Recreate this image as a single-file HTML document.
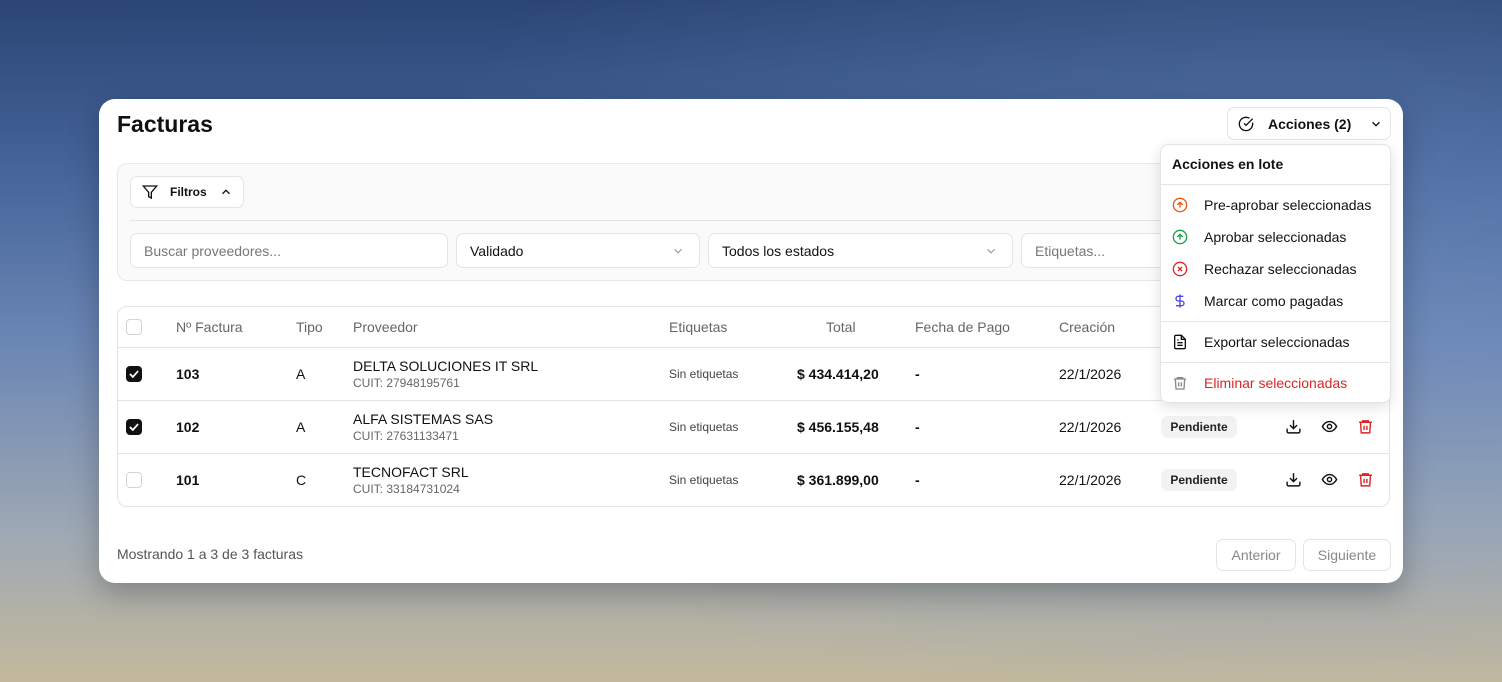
<!DOCTYPE html>
<html><head><meta charset="utf-8"><style>
*{box-sizing:border-box;margin:0;padding:0}
body{width:1502px;height:682px;overflow:hidden;font-family:"Liberation Sans",sans-serif;color:#111;
background:radial-gradient(ellipse 900px 500px at 1300px 250px,rgba(120,150,200,.35),rgba(0,0,0,0)),linear-gradient(180deg,#2a4575 0%,#46649a 25%,#6a86b4 50%,#9ea8b4 78%,#c4b99c 100%);position:relative}
.abs{position:absolute}
.card{left:99px;top:99px;width:1304px;height:484px;background:#fff;border-radius:16px;box-shadow:0 10px 30px rgba(0,0,0,.25)}
.btn{border:1px solid #e4e4e7;border-radius:7px;background:#fff;display:flex;align-items:center}
.inp{top:233px;height:35px;border:1px solid #e4e4e7;border-radius:7px;background:#fff;font-size:14px;display:flex;align-items:center;padding-left:13px}
.cell{position:absolute;font-size:14px}
.hd{color:#666;font-size:14px;top:319px}
.cb{position:absolute;left:126px;width:16px;height:16px;border-radius:4px;border:1px solid #d4d4d8;background:#fff}
.cb.on{background:#111;border-color:#111}
.row{position:absolute;left:117px;width:1273px;border-top:1px solid #e4e4e7}
.badge{position:absolute;left:1161px;height:22px;width:76px;background:#f2f2f3;border-radius:7px;font-size:12px;display:flex;align-items:center;justify-content:center;font-weight:bold;color:#222}
.mi{position:absolute;left:1172px;font-size:14px;display:flex;align-items:center}
.mi svg{margin-right:16px}
</style></head><body>
<div class="abs card"></div>
<div class="abs" style="left:117px;top:111px;font-size:23px;font-weight:bold">Facturas</div>
<div class="abs btn" style="left:1227px;top:107px;width:164px;height:33px;font-size:14px;font-weight:bold;padding-left:10px">
<svg width="16" height="16" viewBox="0 0 24 24" fill="none" stroke="#111" stroke-width="2"><path d="M21.8 10A10 10 0 1 1 17 3.3"/><path d="m9 11 3 3L22 4"/></svg>
<span style="margin-left:14px">Acciones (2)</span>
<svg style="margin-left:18px" width="14" height="14" viewBox="0 0 24 24" fill="none" stroke="#111" stroke-width="2.2"><path d="m6 9 6 6 6-6"/></svg></div>

<div class="abs" style="left:117px;top:163px;width:1273px;height:118px;background:#fafafa;border:1px solid #e8e8ea;border-radius:10px"></div>
<div class="abs btn" style="left:130px;top:176px;width:114px;height:32px;font-size:12px;font-weight:bold;padding-left:11px">
<svg width="16" height="16" viewBox="0 0 24 24" fill="none" stroke="#111" stroke-width="2"><path d="M22 3H2l8 9.5V19l4 2v-8.5z"/></svg>
<span style="margin-left:12px">Filtros</span>
<svg style="margin-left:12px" width="14" height="14" viewBox="0 0 24 24" fill="none" stroke="#111" stroke-width="2.2"><path d="m18 15-6-6-6 6"/></svg></div>
<div class="abs" style="left:130px;top:220px;width:1247px;height:1px;background:#e4e4e7"></div>
<div class="abs inp" style="left:130px;width:318px;color:#777">Buscar proveedores...</div>
<div class="abs inp" style="left:456px;width:244px">Validado<svg class="abs" style="right:14px" width="14" height="14" viewBox="0 0 24 24" fill="none" stroke="#999" stroke-width="2"><path d="m6 9 6 6 6-6"/></svg></div>
<div class="abs inp" style="left:708px;width:305px">Todos los estados<svg class="abs" style="right:14px" width="14" height="14" viewBox="0 0 24 24" fill="none" stroke="#999" stroke-width="2"><path d="m6 9 6 6 6-6"/></svg></div>
<div class="abs inp" style="left:1021px;width:356px;color:#777">Etiquetas...</div>

<div class="abs" style="left:117px;top:306px;width:1273px;height:201px;border:1px solid #e4e4e7;border-radius:10px"></div>
<div class="cb" style="top:319px"></div>
<div class="cell hd" style="left:176px">Nº Factura</div>
<div class="cell hd" style="left:296px">Tipo</div>
<div class="cell hd" style="left:353px">Proveedor</div>
<div class="cell hd" style="left:669px">Etiquetas</div>
<div class="cell hd" style="left:826px">Total</div>
<div class="cell hd" style="left:915px">Fecha de Pago</div>
<div class="cell hd" style="left:1059px">Creación</div>

<div class="row" style="top:347px"></div>
<div class="row" style="top:400px"></div>
<div class="row" style="top:453px"></div>

<div class="cb on" style="top:366px"><svg width="14" height="14" viewBox="0 0 24 24" fill="none" stroke="#fff" stroke-width="3"><path d="M5 12l5 5 9-10"/></svg></div>
<div class="cell" style="left:176px;top:366px;font-weight:bold">103</div>
<div class="cell" style="left:296px;top:366px">A</div>
<div class="cell" style="left:353px;top:358px">DELTA SOLUCIONES IT SRL</div>
<div class="cell" style="left:353px;top:376px;font-size:12px;color:#666">CUIT: 27948195761</div>
<div class="cell" style="left:669px;top:367px;font-size:12px;color:#444">Sin etiquetas</div>
<div class="cell" style="left:797px;top:366px;font-weight:bold">$ 434.414,20</div>
<div class="cell" style="left:915px;top:366px;font-weight:bold">-</div>
<div class="cell" style="left:1059px;top:366px">22/1/2026</div>

<div class="cb on" style="top:419px"><svg width="14" height="14" viewBox="0 0 24 24" fill="none" stroke="#fff" stroke-width="3"><path d="M5 12l5 5 9-10"/></svg></div>
<div class="cell" style="left:176px;top:419px;font-weight:bold">102</div>
<div class="cell" style="left:296px;top:419px">A</div>
<div class="cell" style="left:353px;top:411px">ALFA SISTEMAS SAS</div>
<div class="cell" style="left:353px;top:429px;font-size:12px;color:#666">CUIT: 27631133471</div>
<div class="cell" style="left:669px;top:420px;font-size:12px;color:#444">Sin etiquetas</div>
<div class="cell" style="left:797px;top:419px;font-weight:bold">$ 456.155,48</div>
<div class="cell" style="left:915px;top:419px;font-weight:bold">-</div>
<div class="cell" style="left:1059px;top:419px">22/1/2026</div>
<div class="badge" style="top:416px">Pendiente</div>

<div class="cb" style="top:472px"></div>
<div class="cell" style="left:176px;top:472px;font-weight:bold">101</div>
<div class="cell" style="left:296px;top:472px">C</div>
<div class="cell" style="left:353px;top:464px">TECNOFACT SRL</div>
<div class="cell" style="left:353px;top:482px;font-size:12px;color:#666">CUIT: 33184731024</div>
<div class="cell" style="left:669px;top:473px;font-size:12px;color:#444">Sin etiquetas</div>
<div class="cell" style="left:797px;top:472px;font-weight:bold">$ 361.899,00</div>
<div class="cell" style="left:915px;top:472px;font-weight:bold">-</div>
<div class="cell" style="left:1059px;top:472px">22/1/2026</div>
<div class="badge" style="top:469px">Pendiente</div>

<svg class="abs" style="left:1285px;top:418px" width="17" height="17" viewBox="0 0 24 24" fill="none" stroke="#111" stroke-width="2"><path d="M12 3v12M7 10l5 5 5-5M3 15v4a2 2 0 0 0 2 2h14a2 2 0 0 0 2-2v-4"/></svg>
<svg class="abs" style="left:1321px;top:418px" width="17" height="17" viewBox="0 0 24 24" fill="none" stroke="#111" stroke-width="2"><path d="M2 12s3.5-7 10-7 10 7 10 7-3.5 7-10 7S2 12 2 12z"/><circle cx="12" cy="12" r="3"/></svg>
<svg class="abs" style="left:1357px;top:418px" width="17" height="17" viewBox="0 0 24 24" fill="none" stroke="#dc2626" stroke-width="2"><path d="M3 6h18M8 6V4h8v2M5 6l1 15h12l1-15M10 11v6M14 11v6"/></svg>
<svg class="abs" style="left:1285px;top:471px" width="17" height="17" viewBox="0 0 24 24" fill="none" stroke="#111" stroke-width="2"><path d="M12 3v12M7 10l5 5 5-5M3 15v4a2 2 0 0 0 2 2h14a2 2 0 0 0 2-2v-4"/></svg>
<svg class="abs" style="left:1321px;top:471px" width="17" height="17" viewBox="0 0 24 24" fill="none" stroke="#111" stroke-width="2"><path d="M2 12s3.5-7 10-7 10 7 10 7-3.5 7-10 7S2 12 2 12z"/><circle cx="12" cy="12" r="3"/></svg>
<svg class="abs" style="left:1357px;top:471px" width="17" height="17" viewBox="0 0 24 24" fill="none" stroke="#dc2626" stroke-width="2"><path d="M3 6h18M8 6V4h8v2M5 6l1 15h12l1-15M10 11v6M14 11v6"/></svg>

<div class="abs" style="left:117px;top:546px;font-size:14px;color:#555">Mostrando 1 a 3 de 3 facturas</div>
<div class="abs btn" style="left:1216px;top:539px;width:80px;height:32px;font-size:14px;color:#888;justify-content:center">Anterior</div>
<div class="abs btn" style="left:1303px;top:539px;width:88px;height:32px;font-size:14px;color:#888;justify-content:center">Siguiente</div>

<div class="abs" style="left:1160px;top:144px;width:231px;height:259px;background:#fff;border:1px solid #e4e4e7;border-radius:8px;box-shadow:0 4px 14px rgba(0,0,0,.12)"></div>
<div class="abs" style="left:1172px;top:156px;font-size:14px;font-weight:bold">Acciones en lote</div>
<div class="abs" style="left:1160px;top:184px;width:231px;height:1px;background:#e4e4e7"></div>
<div class="mi" style="top:197px"><svg width="16" height="16" viewBox="0 0 24 24" fill="none" stroke="#ea580c" stroke-width="2"><circle cx="12" cy="12" r="10"/><path d="M12 16V8M8 12l4-4 4 4"/></svg>Pre-aprobar seleccionadas</div>
<div class="mi" style="top:229px"><svg width="16" height="16" viewBox="0 0 24 24" fill="none" stroke="#16a34a" stroke-width="2"><circle cx="12" cy="12" r="10"/><path d="M12 16V8M8 12l4-4 4 4"/></svg>Aprobar seleccionadas</div>
<div class="mi" style="top:261px"><svg width="16" height="16" viewBox="0 0 24 24" fill="none" stroke="#dc2626" stroke-width="2"><circle cx="12" cy="12" r="10"/><path d="M15 9l-6 6M9 9l6 6"/></svg>Rechazar seleccionadas</div>
<div class="mi" style="top:293px"><svg width="16" height="16" viewBox="0 0 24 24" fill="none" stroke="#4f46e5" stroke-width="2"><path d="M12 2v20M17 5H9.5a3.5 3.5 0 0 0 0 7h5a3.5 3.5 0 0 1 0 7H6"/></svg>Marcar como pagadas</div>
<div class="abs" style="left:1160px;top:321px;width:231px;height:1px;background:#e4e4e7"></div>
<div class="mi" style="top:334px"><svg width="16" height="16" viewBox="0 0 24 24" fill="none" stroke="#111" stroke-width="2"><path d="M14 2H6a2 2 0 0 0-2 2v16a2 2 0 0 0 2 2h12a2 2 0 0 0 2-2V8z"/><path d="M14 2v6h6M16 13H8M16 17H8M10 9H8"/></svg>Exportar seleccionadas</div>
<div class="abs" style="left:1160px;top:362px;width:231px;height:1px;background:#e4e4e7"></div>
<div class="mi" style="top:375px;color:#dc2626"><svg width="16" height="16" viewBox="0 0 24 24" fill="none" stroke="#888" stroke-width="2"><path d="M3 6h18M8 6V4h8v2M5 6l1 15h12l1-15M10 11v6M14 11v6"/></svg>Eliminar seleccionadas</div>
</body></html>
